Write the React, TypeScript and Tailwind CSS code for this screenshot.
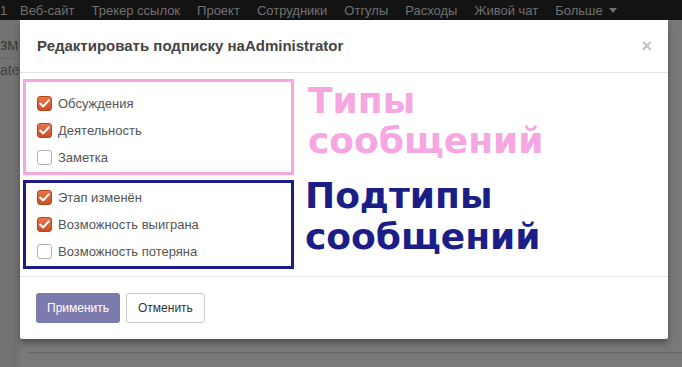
import React from "react";

const navItems = ["Веб-сайт", "Трекер ссылок", "Проект", "Сотрудники", "Отгулы", "Расходы", "Живой чат"];

function Check({ checked }: { checked: boolean }) {
  if (checked) {
    return (
      <span className="flex h-[15px] w-[15px] items-center justify-center rounded-[3px] border border-[#b5471f] bg-gradient-to-b from-[#e8764a] to-[#c8502a]">
        <svg width="11" height="9" viewBox="0 0 11 9">
          <path d="M1.2 4.6 L4.2 7.4 L9.8 1.4" fill="none" stroke="#fff" strokeWidth="2.1" strokeLinecap="round" strokeLinejoin="round" />
        </svg>
      </span>
    );
  }
  return <span className="h-[15px] w-[15px] rounded-[3px] border border-[#b3b3b3] bg-white" />;
}

function Row({ checked, label }: { checked: boolean; label: string }) {
  return (
    <div className="flex h-[27px] items-center gap-[6px]">
      <Check checked={checked} />
      <span className="text-[13px] text-[#555]">{label}</span>
    </div>
  );
}

export default function App() {
  return (
    <div
      className="relative h-[367px] w-[682px] overflow-hidden bg-[#797979]"
      style={{ fontFamily: '"Liberation Sans", Arial, sans-serif' }}
    >
      <div className="absolute left-0 top-[20px] h-[347px] w-[20px] bg-[#737373]">
        <div className="mt-[17px] text-[16px] leading-none text-[#3a3a3a]">зм</div>
        <div className="mt-[5px] border-t border-[#666] pt-[4px] text-[14px] leading-none text-[#3f3f3f]">ate</div>
        <div className="absolute left-[14px] top-[0px] h-[347px] w-px bg-[#6c6c6c]" />
      </div>
      <div className="absolute left-[28px] right-0 top-[352px] h-px bg-[#666]" />

      <nav className="relative flex h-[20px] items-center bg-[#131313] text-[13px] leading-none text-[#717171]">
        <span className="w-[20px] pl-0">1</span>
        <div className="flex gap-[17px]">
          {navItems.map((n) => (
            <span key={n}>{n}</span>
          ))}
          <span className="flex items-center gap-[6px]">
            Больше
            <svg width="8" height="5" viewBox="0 0 8 5">
              <path d="M0 0 L8 0 L4 5 Z" fill="#717171" />
            </svg>
          </span>
        </div>
      </nav>

      <div className="relative mx-[20px] w-[648px] rounded-b-[2px] bg-white shadow-[0_4px_6px_rgba(0,0,0,0.35)]">
        <div className="flex h-[53px] items-center justify-between border-b border-[#e5e5e5] pl-[17px] pr-[16px]">
          <span className="text-[15px] font-bold text-[#444]">Редактировать подписку наAdministrator</span>
          <span className="text-[18px] font-bold leading-none text-[#c4c4c4]">×</span>
        </div>

        <div className="flex border-b border-[#e5e5e5] pb-[7px] pl-[3px] pt-[6px]">
          <div className="flex w-[271px] flex-col gap-[5px]">
            <div className="border-[3px] border-[#f6a6e0] pb-[1px] pl-[11px] pt-[8px]">
              <Row checked label="Обсуждения" />
              <Row checked label="Деятельность" />
              <Row checked={false} label="Заметка" />
            </div>
            <div className="border-[3px] border-[#1b1e87] pb-[1px] pl-[11px] pt-[1px]">
              <Row checked label="Этап изменён" />
              <Row checked label="Возможность выиграна" />
              <Row checked={false} label="Возможность потеряна" />
            </div>
          </div>
          <div
            className="ml-[14px] mt-[2px] flex flex-col text-[36px] font-bold leading-[40px]"
            style={{ fontFamily: '"DejaVu Sans", sans-serif' }}
          >
            <div className="text-[#f6a6e0]">
              <div>Типы</div>
              <div>сообщений</div>
            </div>
            <div className="ml-[-3px] mt-[15px] text-[#1b1e87]">
              <div>Подтипы</div>
              <div className="mt-[1px]">сообщений</div>
            </div>
          </div>
        </div>

        <div className="flex h-[62px] items-center gap-[6px] pl-[16px]">
          <button className="h-[30px] rounded-[3px] bg-[#7c7bad] px-[11px] text-[12px] text-white">Применить</button>
          <button className="h-[30px] rounded-[3px] border border-[#ccc] bg-white px-[11px] text-[12px] text-[#333]">Отменить</button>
        </div>
      </div>
    </div>
  );
}
